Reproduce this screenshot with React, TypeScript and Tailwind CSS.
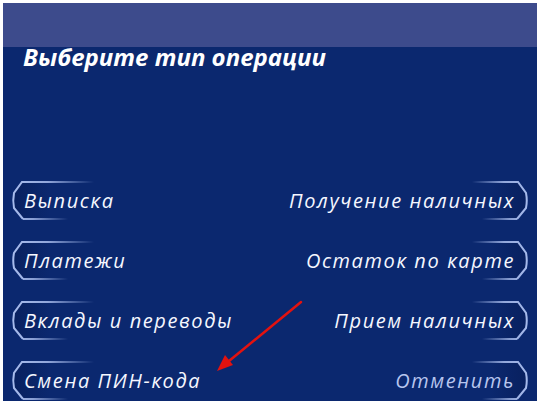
import React, { useId } from 'react';

type Side = 'left' | 'right';

interface BracketProps {
  side: Side;
  topLen: number;
  bottomLen: number;
}

// light-blue "(" frame that fades out toward the text
const Bracket: React.FC<BracketProps> = ({ side, topLen, bottomLen }) => {
  const id = useId().replace(/:/g, '');
  const pos = side === 'left' ? 'left-[7px]' : 'right-[7px] -scale-x-100';
  return (
    <svg
      className={`absolute top-0 ${pos} pointer-events-none`}
      width="100"
      height="40"
      viewBox="0 0 100 40"
      fill="none"
    >
      <defs>
        <linearGradient id={`t${id}`} gradientUnits="userSpaceOnUse" x1="0" y1="0" x2={topLen} y2="0">
          <stop offset="0" stopColor="#a9bdee" />
          <stop offset="0.45" stopColor="#a9bdee" stopOpacity="0.85" />
          <stop offset="1" stopColor="#a9bdee" stopOpacity="0" />
        </linearGradient>
        <linearGradient id={`b${id}`} gradientUnits="userSpaceOnUse" x1="0" y1="0" x2={bottomLen} y2="0">
          <stop offset="0" stopColor="#a9bdee" />
          <stop offset="0.4" stopColor="#a9bdee" stopOpacity="0.8" />
          <stop offset="1" stopColor="#a9bdee" stopOpacity="0" />
        </linearGradient>
        <linearGradient id={`f${id}`} x1="0" y1="0" x2="1" y2="0">
          <stop offset="0" stopColor="#061a52" stopOpacity="0.55" />
          <stop offset="1" stopColor="#061a52" stopOpacity="0" />
        </linearGradient>
      </defs>
      <path d="M40 1 H12 L4 12 Q2.5 19.5 4 27 L13 38 H40 Z" fill={`url(#f${id})`} />
      <path d={`M${topLen} 1 H12 L4 12 Q2.5 19.5 4 27 L13 38`} stroke={`url(#t${id})`} strokeWidth="2" />
      <path d={`M13 38 H${bottomLen}`} stroke={`url(#b${id})`} strokeWidth="2" />
    </svg>
  );
};

interface AtmButtonProps {
  label: string;
  side: Side;
  muted?: boolean;
}

const AtmButton: React.FC<AtmButtonProps> = ({ label, side, muted }) => {
  const isLeft = side === 'left';
  return (
    <div
      className={`relative h-[40px] flex items-center ${
        isLeft ? 'justify-start pl-[21px]' : 'justify-end pr-[22px]'
      }`}
    >
      {isLeft ? (
        <Bracket side="left" topLen={84} bottomLen={58} />
      ) : (
        <Bracket side="right" topLen={58} bottomLen={48} />
      )}
      <span
        className={`relative text-[20px] italic leading-none tracking-[1.6px] ${
          muted ? 'text-[#b7c5ee]' : 'text-[#f5f7ff]'
        }`}
      >
        {label}
      </span>
    </div>
  );
};

const rows: [string, string, boolean?][] = [
  ['Выписка', 'Получение наличных'],
  ['Платежи', 'Остаток по карте'],
  ['Вклады и переводы', 'Прием наличных'],
  ['Смена ПИН-кода', 'Отменить', true],
];

export default function App() {
  return (
    <div
      className="w-[540px] h-[409px] bg-white pt-[3px] pl-[3px] pr-[3px] pb-[8px]"
      style={{ fontFamily: '"Open Sans", "DejaVu Sans", sans-serif' }}
    >
      <div className="relative h-full bg-[#0b286f] flex flex-col overflow-hidden">
        <div className="h-[44px] shrink-0 bg-[#3d4b8c]" />
        <h1 className="-mt-[2px] pl-[20px] text-[24px] leading-[24px] font-bold italic text-white">
          Выберите тип операции
        </h1>

        <div className="mt-[112px] grid grid-cols-2 gap-y-[20px]">
          {rows.map(([l, r, muted]) => (
            <React.Fragment key={l}>
              <AtmButton label={l} side="left" />
              <AtmButton label={r} side="right" muted={muted} />
            </React.Fragment>
          ))}
        </div>

        {/* red pointer arrow */}
        <svg className="absolute left-0 top-0 pointer-events-none" width="534" height="398" viewBox="0 0 534 398">
          <line x1="298" y1="299" x2="226" y2="358" stroke="#e3120f" strokeWidth="2.5" strokeLinecap="round" />
          <polygon points="214,368 230,362 222,352" fill="#e3120f" />
        </svg>
      </div>
    </div>
  );
}
